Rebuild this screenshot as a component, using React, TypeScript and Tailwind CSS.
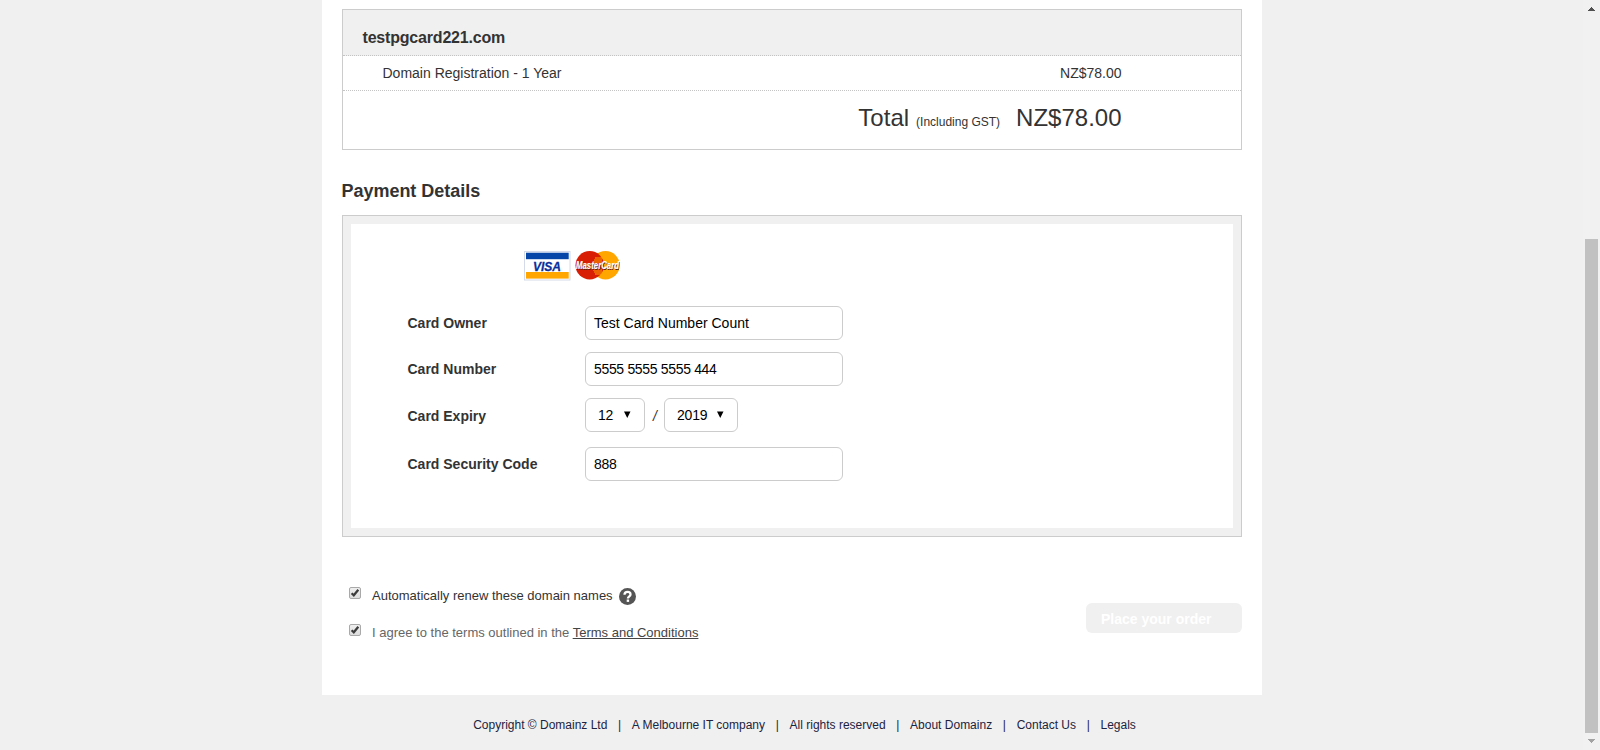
const inputClass =
  "h-[34px] w-[258px] rounded-md border border-[#ccc] bg-white px-2 text-sm text-black outline-none";

function CardLogos() {
  return (
    <svg width="104" height="32" viewBox="0 0 104 32" className="block overflow-visible">
      <rect x="0.5" y="1.5" width="45.500" height="28.500" fill="#fff" stroke="#d5daea" />
      <rect x="2" y="2.700" width="42.700" height="6.500" fill="#0546a8" />
      <rect x="2" y="22" width="42.700" height="6.600" fill="#ffa600" />
      <text x="9" y="20.600" textLength="28" lengthAdjust="spacingAndGlyphs" fontFamily="Liberation Sans, sans-serif" fontSize="13.5" fontWeight="700" fontStyle="italic" fill="#0a2f9a" stroke="#0a2f9a" strokeWidth="0.3">VISA</text>
      <circle cx="81.500" cy="15.300" r="14.200" fill="#ffa600" />
      <circle cx="65.700" cy="15.300" r="14.200" fill="#d81e05" />
      <path d="M71 8h7M70 10h8M69 12h9M69 20h9M70 22h8M71 24h6" stroke="#ffa600" strokeWidth="1" />
      <text x="52.500" y="19.900" textLength="43" lengthAdjust="spacingAndGlyphs" fontFamily="Liberation Sans, sans-serif" fontSize="10" fontWeight="700" fontStyle="italic" fill="#5a1c10">MasterCard</text>
      <text x="52" y="19.200" textLength="43" lengthAdjust="spacingAndGlyphs" fontFamily="Liberation Sans, sans-serif" fontSize="10" fontWeight="700" fontStyle="italic" fill="#fff" stroke="#fff" strokeWidth="0.2">MasterCard</text>
    </svg>
  );
}

function CheckedBox() {
  return (
    <svg width="13" height="13" viewBox="0 0 13 13" className="block shrink-0" role="checkbox" aria-checked="true">
      <defs>
        <linearGradient id="box" x1="0" y1="0" x2="0" y2="1">
          <stop offset="0" stopColor="#f0f0f0" />
          <stop offset="1" stopColor="#dcdcdc" />
        </linearGradient>
      </defs>
      <rect x="0.5" y="0.5" width="11" height="11" rx="1.500" fill="url(#box)" stroke="#a9a9a9" />
      <path d="M2.600 6.200L4.800 8.300L9.300 2.700" fill="none" stroke="#3c3c3c" strokeWidth="2.200" />
    </svg>
  );
}

function HelpIcon() {
  return (
    <svg width="17" height="17" viewBox="0 0 17 17" className="block">
      <circle cx="8.500" cy="8.500" r="8.500" fill="#555" />
      <path d="M5.500 6.700C5.500 4.800 6.800 3.900 8.600 3.900C10.400 3.900 11.500 4.900 11.500 6.400C11.500 8.300 8.900 8.300 8.900 10.500" fill="none" stroke="#fff" strokeWidth="2.300" />
      <rect x="7.700" y="11.500" width="2.400" height="2.400" fill="#fff" />
    </svg>
  );
}

function Select({ value, className }: { value: string; className: string }) {
  return (
    <div className={`flex h-[34px] items-center justify-between rounded-md border border-[#ccc] bg-white pr-[13px] pl-3 text-sm text-black ${className}`}>
      <span className="tracking-[-0.2px]">{value}</span>
      <svg width="7" height="7" viewBox="0 0 7 7" className="mb-px block">
        <path d="M0 0.500H6.500L3.250 7Z" fill="#000" />
      </svg>
    </div>
  );
}

function Label({ children }: { children: string }) {
  return <label className="w-[177.500px] pb-px text-sm font-bold">{children}</label>;
}

function Scrollbar() {
  return (
    <div className="flex h-full w-[17px] flex-col items-center justify-between bg-[#f1f1f1]">
      <svg width="17" height="17" className="block shrink-0">
        <path d="M5 11h7v-1h-1v-1h-1v-1h-1v-1h-1v1h-1v1h-1v1h-1z" fill="#505050" />
      </svg>
      <div className="mt-[222px] w-[13px] grow bg-[#c1c1c1]" />
      <svg width="17" height="17" className="block shrink-0">
        <path d="M5 6h7v1h-1v1h-1v1h-1v1h-1v-1h-1v-1h-1v-1h-1z" fill="#a3a3a3" />
      </svg>
    </div>
  );
}

const footerItems = ["Copyright © Domainz Ltd", "A Melbourne IT company", "All rights reserved", "About Domainz", "Contact Us", "Legals"];

export default function App() {
  return (
    <div className="flex h-[750px] w-[1600px] overflow-hidden bg-[#f0f0f0] font-['Liberation_Sans',Arial,sans-serif] text-[#333]">
      <div className="flex w-[1583px] flex-col items-center">
        <main className="mr-[-1px] h-[695px] w-[940px] bg-white px-5 pt-[9px]">
          <section className="h-[141px] border border-[#ccc]">
            <div className="flex h-[46px] items-center border-b border-dotted border-[#c4c4c4] bg-[#f0f0f0] pt-[11px] pl-[19.500px] font-bold tracking-[-0.19px]">testpgcard221.com</div>
            <div className="flex h-[35px] items-center justify-between border-b border-dotted border-[#c4c4c4] pr-[119.500px] pl-[39.500px] text-sm">
              <span>Domain Registration - 1 Year</span>
              <span>NZ$78.00</span>
            </div>
            <div className="flex items-baseline justify-end pt-[11px] pr-[119.500px] text-2xl">
              <span>Total</span>
              <span className="ml-[7px] text-xs">(Including GST)</span>
              <span className="ml-4">NZ$78.00</span>
            </div>
          </section>

          <h2 className="ml-[-0.500px] flex h-[65px] items-center pt-[17px] text-lg font-bold tracking-[-0.03px]">Payment Details</h2>

          <section className="h-[322px] border border-[#ccc] bg-[#f0f0f0] p-2">
            <div className="h-[304px] bg-white pt-[26px] pl-[56.500px]">
              <div className="ml-[116.500px] h-[56px]">
                <CardLogos />
              </div>
              <div className="flex items-center">
                <Label>Card Owner</Label>
                <input className={inputClass} defaultValue="Test Card Number Count" />
              </div>
              <div className="mt-3 flex items-center">
                <Label>Card Number</Label>
                <input className={`${inputClass} tracking-[-0.33px]`} defaultValue="5555 5555 5555 444" />
              </div>
              <div className="mt-3 flex items-center">
                <div className="flex pt-[2px]"><Label>Card Expiry</Label></div>
                <Select value="12" className="w-[60px]" />
                <span className="w-[19px] pt-px pl-px text-center text-sm italic">/</span>
                <Select value="2019" className="w-[74px]" />
              </div>
              <div className="mt-[15px] flex items-center">
                <Label>Card Security Code</Label>
                <input className={`${inputClass} tracking-[-0.33px]`} defaultValue="888" />
              </div>
            </div>
          </section>

          <div className="flex justify-between text-[13px]">
            <div className="pt-[49px] pl-[7px]">
              <div className="flex h-[20px] items-center">
                <div className="mb-[5px]"><CheckedBox /></div>
                <span className="ml-[10px]">Automatically renew these domain names</span>
                <span className="ml-[6px]"><HelpIcon /></span>
              </div>
              <div className="mt-[17px] flex h-[20px] items-center text-[#666]">
                <div className="mb-[5px]"><CheckedBox /></div>
                <span className="ml-[10px]">
                  I agree to the terms outlined in the <a className="text-[#444] underline">Terms and Conditions</a>
                </span>
              </div>
            </div>
            <button className="mt-[66px] h-[30px] w-[156px] rounded-md bg-[#f0f0f0] pt-px pl-[15px] text-left text-sm font-bold text-white">Place your order</button>
          </div>
        </main>
        <footer className="ml-[26px] flex pt-[22px] text-xs leading-4 text-[#1c2340]">
          {footerItems.map((item, i) => (
            <span key={item} className="flex">
              {i > 0 && <span className="w-[24.500px] text-center">|</span>}
              {item}
            </span>
          ))}
        </footer>
      </div>
      <Scrollbar />
    </div>
  );
}
